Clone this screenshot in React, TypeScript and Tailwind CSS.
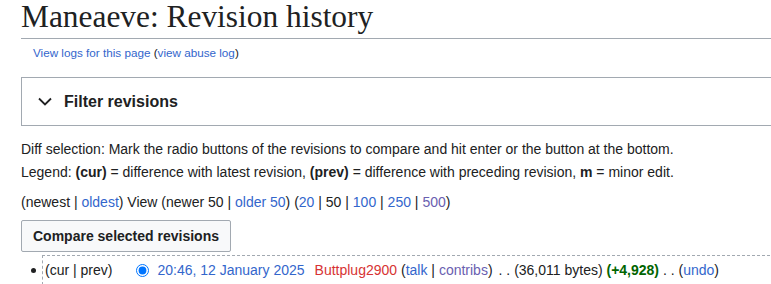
import React from "react";

const link = "text-[#3366cc]";
const visited = "text-[#6a60b0]";

export default function App() {
  return (
    <div className="h-[284px] w-[771px] overflow-hidden bg-white font-['Liberation_Sans',Arial,sans-serif] text-[#202122]">
      <div className="w-[820px] pl-[21px]">
        <h1 className="border-b border-[#a2a9b1] pb-[4px] font-['Liberation_Serif','Times_New_Roman',serif] text-[31.4px] leading-[34px]">
          Maneaeve: Revision history
        </h1>

        <div className="mt-[5px] pl-[12px] text-[11.7px] leading-[17px]">
          <span className={link}>View logs for this page</span>{" "}
          <span className="text-[#202122]">(</span>
          <span className={link}>view abuse log</span>
          <span className="text-[#202122]">)</span>
        </div>

        <div className="mt-[16px] flex h-[49px] items-center gap-[12px] border border-[#a2a9b1] pl-[16px]">
          <svg width="14" height="9" viewBox="0 0 14 9" fill="none">
            <path d="M1 1.5l6 6 6-6" stroke="#202122" strokeWidth="1.8" />
          </svg>
          <span className="text-[16px] font-bold">Filter revisions</span>
        </div>

        <div className="mt-[12px] text-[14px] leading-[22.5px]">
          <p>
            Diff selection: Mark the radio buttons of the revisions to compare
            and hit enter or the button at the bottom.
          </p>
          <p>
            Legend: <b>(cur)</b> = difference with latest revision,{" "}
            <b>(prev)</b> = difference with preceding revision, <b>m</b> =
            minor edit.
          </p>
        </div>

        <p className="mt-[7.5px] text-[14px] leading-[22.5px]">
          (newest | <span className={link}>oldest</span>) View (newer 50 |{" "}
          <span className={link}>older 50</span>) (
          <span className={link}>20</span> | 50 |{" "}
          <span className={link}>100</span> | <span className={link}>250</span>{" "}
          | <span className={visited}>500</span>)
        </p>

        <button className="mt-[7px] h-[32px] rounded-[2px] border border-[#a2a9b1] bg-[#f8f9fa] px-[11px] text-[14px] font-bold text-[#202122]">
          Compare selected revisions
        </button>

        <ul className="mt-[3px] text-[14px]">
          <li className="flex items-center">
            <span className="ml-[10px] mr-[6px] h-[5px] w-[5px] rounded-full bg-[#202122]" />
            <div className="flex h-[30px] flex-1 items-center whitespace-pre border border-dashed border-[#a2a9b1] pl-[2px]">
              <span>(cur | prev)</span>
              <input
                type="radio"
                checked
                readOnly
                className="ml-[24px] mr-[8px] h-[13px] w-[13px]"
              />
              <span className={link}>20:46, 12 January 2025</span>
              <span className="ml-[10px] text-[#d73333]">Buttplug2900</span>
              <span> (</span>
              <span className={link}>talk</span>
              <span> | </span>
              <span className={visited}>contribs</span>
              <span>)</span>
              <span className="ml-[6px]">. . (36,011 bytes) </span>
              <span className="font-bold text-[#006400]">(+4,928)</span>
              <span> . . (</span>
              <span className={link}>undo</span>
              <span>)</span>
            </div>
          </li>
        </ul>
      </div>
    </div>
  );
}
